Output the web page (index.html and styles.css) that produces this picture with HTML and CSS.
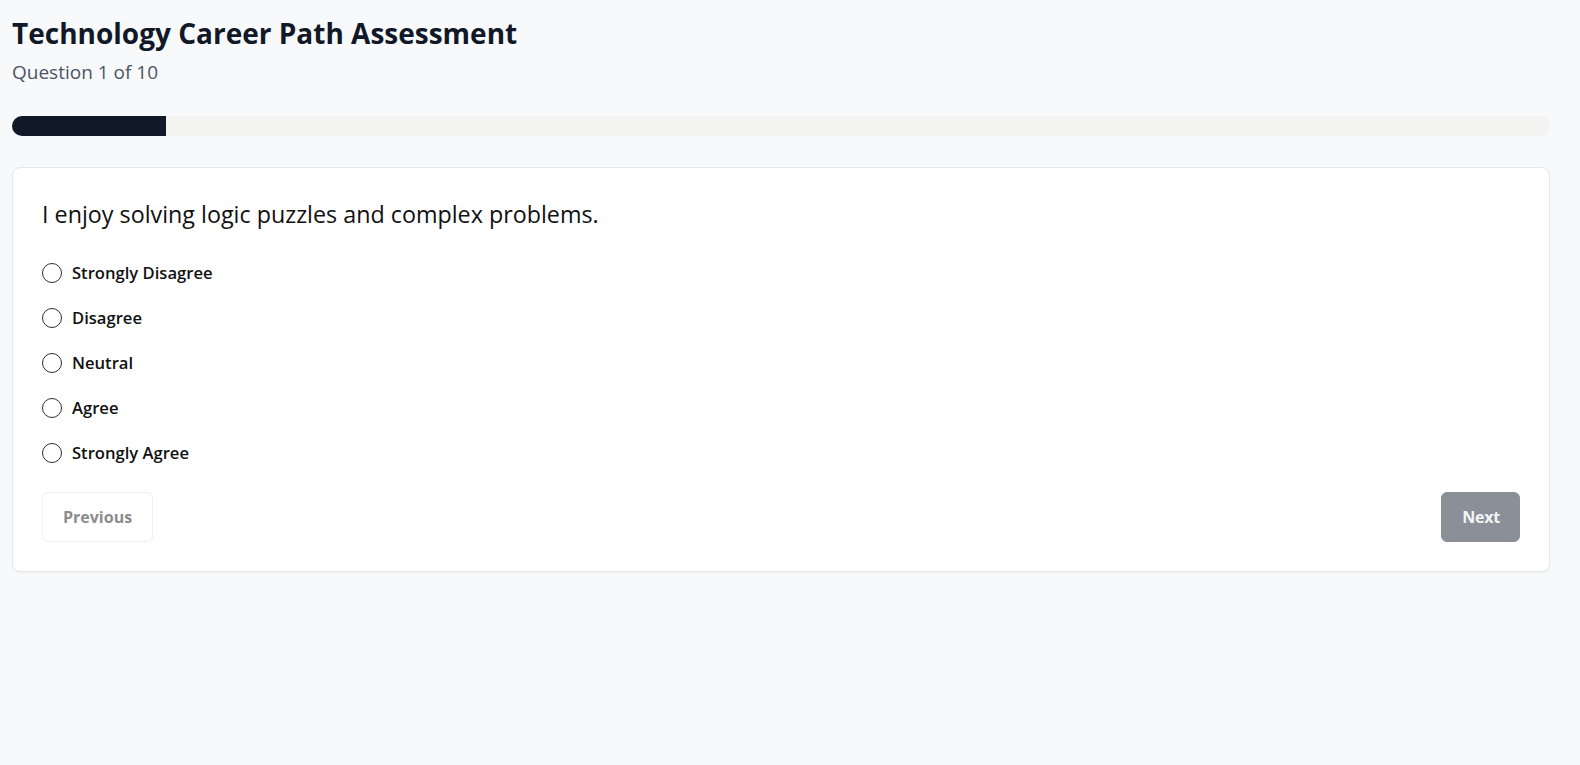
FILE: index.html
```html
<!DOCTYPE html>
<html lang="en">
<head>
<meta charset="utf-8">
<title>Technology Career Path Assessment</title>
<link rel="stylesheet" href="styles.css">
</head>
<body>
<main class="page">
  <header class="header">
    <h1 class="title">Technology Career Path Assessment</h1>
    <p class="subtitle">Question 1 of 10</p>
  </header>
  <div class="progress"><div class="progress-fill" style="width:10%"></div></div>
  <section class="card">
    <h2 class="question">I enjoy solving logic puzzles and complex problems.</h2>
    <div class="options">
      <label class="option"><input type="radio" name="q1" class="radio"><span>Strongly Disagree</span></label>
      <label class="option"><input type="radio" name="q1" class="radio"><span>Disagree</span></label>
      <label class="option"><input type="radio" name="q1" class="radio"><span>Neutral</span></label>
      <label class="option"><input type="radio" name="q1" class="radio"><span>Agree</span></label>
      <label class="option"><input type="radio" name="q1" class="radio"><span>Strongly Agree</span></label>
    </div>
    <div class="actions">
      <button class="btn btn-prev" disabled>Previous</button>
      <button class="btn btn-next" disabled>Next</button>
    </div>
  </section>
</main>
</body>
</html>
```
FILE: styles.css
```css
* { box-sizing: border-box; }
html, body { margin: 0; }
body {
  background: #f8f9fb;
  font-family: "Open Sans", "Segoe UI", "Noto Sans", sans-serif;
  color: #111827;
}
.page {
  padding: 12px 30px 40px 12px;
}
.title {
  margin: 0;
  font-size: 28px;
  line-height: 42px;
  font-weight: 700;
  color: #111827;
}
.subtitle {
  margin: 5px 0 0;
  font-size: 19px;
  line-height: 27px;
  color: #4b5563;
}
.progress {
  margin-top: 30px;
  height: 20px;
  background: #f3f3f1;
  border-radius: 10px;
  overflow: hidden;
}
.progress-fill {
  height: 100%;
  background: #111827;
}
.card {
  margin-top: 31px;
  background: #fff;
  border: 1px solid #e5e7eb;
  border-radius: 8px;
  padding: 30px 29px 29px;
  box-shadow: 0 1px 2px rgba(0,0,0,0.04);
}
.question {
  margin: 0 0 19px;
  font-size: 23.3px;
  line-height: 33px;
  font-weight: 400;
  color: #111;
}
.options {
  display: flex;
  flex-direction: column;
}
.option {
  display: flex;
  align-items: center;
  gap: 10px;
  padding: 10px 0;
  line-height: 25px;
  font-size: 16.6px;
  font-weight: 600;
  color: #111;
  cursor: pointer;
}
.radio {
  appearance: none;
  -webkit-appearance: none;
  margin: 0;
  width: 20px;
  height: 20px;
  border: 1.5px solid #2b2f36;
  border-radius: 50%;
  background: #fff;
  flex: none;
}
.actions {
  margin-top: 17px;
  display: flex;
  justify-content: space-between;
}
.btn {
  font-family: inherit;
  font-size: 16px;
  font-weight: 700;
  line-height: 24px;
  padding: 12px 20px;
  border-radius: 6px;
}
.btn-prev {
  background: #fff;
  border: 1px solid #efefef;
  color: #8c8c8c;
}
.btn-next {
  padding: 12px 19px 12px 20px;
  background: #8b8f97;
  border: 1px solid #8b8f97;
  color: #f3f4f6;
  letter-spacing: -0.2px;
}
```
